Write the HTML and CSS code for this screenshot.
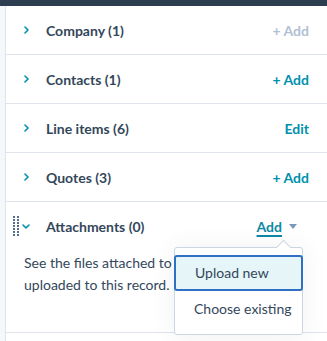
FILE: index.html
```html
<!DOCTYPE html>
<html lang="en">
<head>
    <meta charset="UTF-8">
    <title>Record sidebar</title>
    <link rel="stylesheet" href="styles.css">
</head>
<body>

    <div class="topbar"></div>

    <div class="panel">
        <div class="rail"></div>

        <div class="sections">
            <!-- Company -->
            <div class="section">
                <div class="section-header">
                    <span class="toggle">
                        <svg width="5" height="8" viewBox="0 0 5 8"><path d="M1 1l3 3-3 3" fill="none" stroke="#0091ae" stroke-width="1.6" stroke-linecap="round" stroke-linejoin="round"/></svg>
                    </span>
                    <span class="title">Company (1)</span>
                    <a href="#" class="action disabled">+ Add</a>
                </div>
            </div>

            <!-- Contacts -->
            <div class="section">
                <div class="section-header">
                    <span class="toggle">
                        <svg width="5" height="8" viewBox="0 0 5 8"><path d="M1 1l3 3-3 3" fill="none" stroke="#0091ae" stroke-width="1.6" stroke-linecap="round" stroke-linejoin="round"/></svg>
                    </span>
                    <span class="title">Contacts (1)</span>
                    <a href="#" class="action">+ Add</a>
                </div>
            </div>

            <!-- Line items -->
            <div class="section">
                <div class="section-header">
                    <span class="toggle">
                        <svg width="5" height="8" viewBox="0 0 5 8"><path d="M1 1l3 3-3 3" fill="none" stroke="#0091ae" stroke-width="1.6" stroke-linecap="round" stroke-linejoin="round"/></svg>
                    </span>
                    <span class="title">Line items (6)</span>
                    <a href="#" class="action">Edit</a>
                </div>
            </div>

            <!-- Quotes -->
            <div class="section">
                <div class="section-header">
                    <span class="toggle">
                        <svg width="5" height="8" viewBox="0 0 5 8"><path d="M1 1l3 3-3 3" fill="none" stroke="#0091ae" stroke-width="1.6" stroke-linecap="round" stroke-linejoin="round"/></svg>
                    </span>
                    <span class="title">Quotes (3)</span>
                    <a href="#" class="action">+ Add</a>
                </div>
            </div>

            <!-- Attachments (open) -->
            <div class="section open">
                <span class="drag-handle">
                    <svg width="6" height="21" viewBox="0 0 6 21">
                        <g fill="#516f90">
                            <rect x="0" y="0" width="2" height="2"/><rect x="4" y="0" width="2" height="2"/>
                            <rect x="0" y="3" width="2" height="2"/><rect x="4" y="3" width="2" height="2"/>
                            <rect x="0" y="6" width="2" height="2"/><rect x="4" y="6" width="2" height="2"/>
                            <rect x="0" y="9" width="2" height="2"/><rect x="4" y="9" width="2" height="2"/>
                            <rect x="0" y="12" width="2" height="2"/><rect x="4" y="12" width="2" height="2"/>
                            <rect x="0" y="15" width="2" height="2"/><rect x="4" y="15" width="2" height="2"/>
                            <rect x="0" y="18" width="2" height="2"/><rect x="4" y="18" width="2" height="2"/>
                        </g>
                    </svg>
                </span>
                <div class="section-header">
                    <span class="toggle">
                        <svg width="8" height="5" viewBox="0 0 8 5"><path d="M1 1l3 3 3-3" fill="none" stroke="#0091ae" stroke-width="1.6" stroke-linecap="round" stroke-linejoin="round"/></svg>
                    </span>
                    <span class="title">Attachments (0)</span>
                    <a href="#" class="action dropdown-toggle">Add</a>
                    <span class="caret"></span>
                </div>
                <p class="section-body">See the files attached to your activities or uploaded to this record.</p>

                <div class="dropdown">
                    <div class="dropdown-item selected">Upload new</div>
                    <div class="dropdown-item">Choose existing</div>
                </div>
            </div>
        </div>
    </div>

</body>
</html>
```

FILE: styles.css
```css
* {
    margin: 0;
    padding: 0;
    box-sizing: border-box;
}

body {
    font-family: 'Lato', 'Open Sans', sans-serif;
    background: #fff;
    color: #33475b;
    overflow: hidden;
}

.topbar {
    height: 6px;
    background: #2d3e50;
}

.panel {
    display: flex;
    min-height: 335px;
}

.rail {
    width: 6px;
    background: #f5f8fa;
    border-right: 1px solid #dfe3eb;
}

.sections {
    flex: 1;
}

.section {
    position: relative;
    border-bottom: 1px solid #dfe3eb;
}

.section-header {
    display: flex;
    align-items: center;
    height: 48px;
    padding: 0 18px 0 14px;
}

.toggle {
    width: 12px;
    display: flex;
    justify-content: center;
    margin-right: 14px;
}

.title {
    flex: 1;
    font-size: 14px;
    font-weight: 700;
    color: #33475b;
}

.action {
    font-size: 14px;
    font-weight: 700;
    color: #0091ae;
    text-decoration: none;
}

.action.disabled {
    color: #b0c1d4;
}

.dropdown-toggle {
    text-decoration: underline;
    text-underline-offset: 3px;
    text-decoration-thickness: 2px;
    color: #0b8aa5;
}

.caret {
    width: 0;
    height: 0;
    border-left: 4px solid transparent;
    border-right: 4px solid transparent;
    border-top: 5px solid #7c98b6;
    margin: 1px 12px 0 7px;
}

.drag-handle {
    position: absolute;
    top: 14px;
    left: 7px;
    line-height: 0;
}

.section-body {
    font-size: 14px;
    line-height: 22px;
    padding: 2px 18px 36px 18px;
    color: #33475b;
}

/* Add dropdown */
.dropdown {
    position: absolute;
    top: 45px;
    left: 168px;
    width: 129px;
    background: #fff;
    border: 1px solid #cbd6e2;
    border-radius: 3px;
    padding: 7px 0;
    box-shadow: 0 1px 24px rgba(45, 62, 80, 0.08);
}

.dropdown::before {
    content: "";
    position: absolute;
    top: -6px;
    left: 103px;
    width: 10px;
    height: 10px;
    background: #fff;
    border-top: 1px solid #cbd6e2;
    border-left: 1px solid #cbd6e2;
    transform: rotate(45deg);
}

.dropdown-item {
    position: relative;
    height: 36px;
    line-height: 34px;
    padding: 0 6px 0 18px;
    font-size: 14px;
    color: #33475b;
    white-space: nowrap;
    border: 1px solid transparent;
}

.dropdown-item.selected {
    margin: 0 -1px;
    padding: 0 6px 0 19px;
    background: #e5f5f8;
    border: 2px solid #2f6fc4;
    border-radius: 3px;
    line-height: 32px;
}
```
